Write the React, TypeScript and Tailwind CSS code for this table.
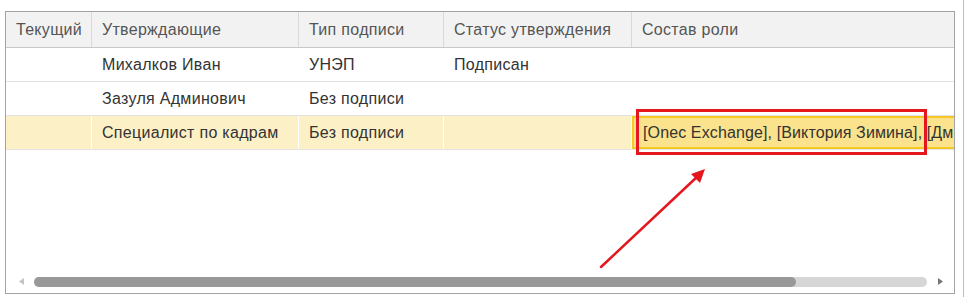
import React from "react";

const cols = ["w-[86px]", "w-[207px]", "w-[145px]", "w-[188px]", "flex-1"];

function Cell({ i, children, cls = "" }: { i: number; children?: React.ReactNode; cls?: string }) {
  return (
    <div className={`${cols[i]} shrink-0 h-full flex items-center pl-[10px] whitespace-nowrap overflow-hidden ${i < 4 ? "border-r" : ""} ${cls}`}>
      {children}
    </div>
  );
}

export default function App() {
  const rows = [
    ["", "Михалков Иван", "УНЭП", "Подписан", ""],
    ["", "Зазуля Админович", "Без подписи", "", ""],
  ];
  return (
    <div className="relative w-[965px] h-[297px] bg-white flex overflow-hidden" style={{ fontFamily: '"Liberation Sans", Arial, sans-serif' }}>
      <div className="pl-[5px] pt-[11px]">
        <div className="w-[950px] h-[283px] border border-[#a3a3a3] flex flex-col text-[16px] tracking-[0.3px] text-[#333333]">
          <div className="h-[36px] flex bg-[#f2f2f2] border-b border-[#c8c8c8] text-[#555555]">
            {["Текущий", "Утверждающие", "Тип подписи", "Статус утверждения", "Состав роли"].map((t, i) => (
              <Cell key={i} i={i} cls="border-[#d9d9d9]">{t}</Cell>
            ))}
          </div>
          {rows.map((r, ri) => (
            <div key={ri} className="h-[34px] flex border-b border-[#e3e3e3]">
              {r.map((t, i) => (
                <Cell key={i} i={i} cls="border-transparent">{t}</Cell>
              ))}
            </div>
          ))}
          <div className="h-[34px] flex border-b border-[#e3e3e3] bg-[#fcf0c6]">
            <Cell i={0} cls="border-white" />
            <Cell i={1} cls="border-white">Специалист по кадрам</Cell>
            <Cell i={2} cls="border-white">Без подписи</Cell>
            <Cell i={3} cls="border-white" />
            <div className="flex-1 h-full flex items-center pl-[9px] whitespace-nowrap overflow-hidden tracking-[0.12px] bg-[#fbe28c] border-2 border-r-0 border-[#f6c823]">
              [Onec Exchange], [Виктория Зимина], [Дм
            </div>
          </div>
          <div className="flex-1" />
          <div className="h-[17px] flex items-center mb-[3px]">
            <div className="w-[28px] flex justify-center pl-[2px]">
              <svg width="5" height="7" viewBox="0 0 5 7"><path d="M5 0 L0 3.5 L5 7 Z" fill="#c4c4c4" /></svg>
            </div>
            <div className="w-[893px] h-[10px] rounded-full bg-[#d6d6d6] flex">
              <div className="w-[762px] h-full rounded-full bg-[#999999]" />
            </div>
            <div className="flex-1 flex justify-center">
              <svg width="5" height="7" viewBox="0 0 5 7"><path d="M0 0 L5 3.5 L0 7 Z" fill="#777777" /></svg>
            </div>
          </div>
        </div>
      </div>
      <div className="ml-[8px] w-px h-full bg-[#bdbdbd]" />

      <div className="absolute left-[636px] top-[109px] w-[291px] h-[46px] border-[3px] border-[#e5161d]" />
      <svg className="absolute left-0 top-0" width="965" height="297" viewBox="0 0 965 297">
        <line x1="601" y1="267" x2="698" y2="176" stroke="#e5161d" strokeWidth="2.5" strokeLinecap="round" />
        <path d="M705 169 L691 174 L700 183 Z" fill="#e5161d" />
      </svg>
    </div>
  );
}
